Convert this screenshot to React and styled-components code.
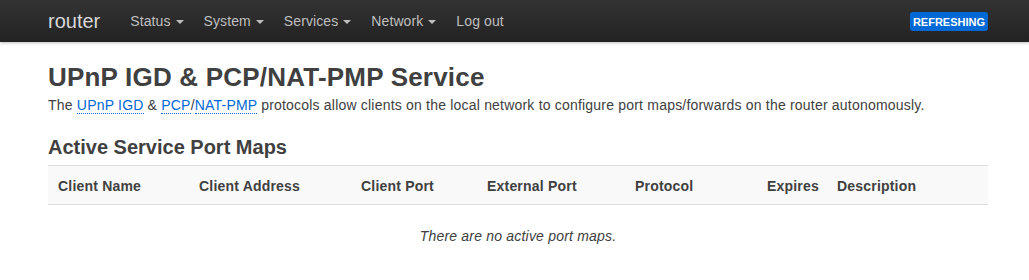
import React from 'react'
import styled, { createGlobalStyle } from 'styled-components'

const GlobalStyle = createGlobalStyle`
html, body {
  margin: 0;
  padding: 0;
  background: #fff;
}
body {
  font-family: "Liberation Sans", Arial, Helvetica, sans-serif;
  font-size: 14px;
  line-height: 18px;
  color: #404040;
}
`

const Header = styled.header`
height: 42px;
background-color: #222;
background-image: linear-gradient(to bottom, #333, #222);
box-shadow: 0 1px 3px rgba(0,0,0,0.25);
`
const Container = styled.div`
width: 940px;
margin-left: 48px;
`
const HeaderInner = styled(Container)`
display: flex;
align-items: center;
height: 42px;
`
const Brand = styled.a`
font-size: 20px;
font-weight: 200;
color: #d8d8d8;
padding-right: 20px;
line-height: 40px;
text-decoration: none;
`
const Nav = styled.ul`
display: flex;
list-style: none;
margin: 0;
padding: 0;
flex: 1;
`
const NavItem = styled.li`
display: flex;
align-items: center;
padding: 0 10px;
line-height: 40px;
color: #bfbfbf;
font-size: 14px;
letter-spacing: 0.1px;
`
const Caret = styled.span`
display: inline-block;
width: 0;
height: 0;
margin-left: 5px;
margin-top: 2px;
border-left: 4px solid transparent;
border-right: 4px solid transparent;
border-top: 4px solid #bfbfbf;
`
const Badge = styled.span`
background: #0069d6;
color: #fff;
font-size: 11px;
font-weight: bold;
line-height: 14px;
padding: 3px 3px 2px;
border-radius: 3px;
text-transform: uppercase;
`
const Main = styled(Container)`
padding-top: 17px;
`
const Title = styled.h2`
margin: 0;
font-size: 26px;
line-height: 36px;
font-weight: bold;
color: #404040;
letter-spacing: 0.2px;
`
const Desc = styled.p`
margin: 1px 0 0;
font-size: 14px;
line-height: 18px;
letter-spacing: 0.2px;
`
const DocLink = styled.a`
color: #0069d6;
text-decoration: none;
border-bottom: 1px dotted #0069d6;
`
const SubTitle = styled.h3`
margin: 20px 0 0;
font-size: 20px;
line-height: 27px;
font-weight: bold;
`
const Table = styled.table`
width: 100%;
border-collapse: collapse;
margin-top: 4px;
table-layout: fixed;
`
const Th = styled.th`
text-align: left;
font-weight: bold;
padding: 11px 10px 9px;
background: #f9f9f9;
border-top: 1px solid #ddd;
border-bottom: 1px solid #ddd;
width: ${({ w }) => w}px;
line-height: 18px;
letter-spacing: 0.2px;
`
const EmptyCell = styled.td`
text-align: center;
font-style: italic;
padding: 22px 10px 10px;
letter-spacing: 0.2px;
`

const columns = [
  { name: 'Client Name', w: 121 },
  { name: 'Client Address', w: 142 },
  { name: 'Client Port', w: 106 },
  { name: 'External Port', w: 128 },
  { name: 'Protocol', w: 112 },
  { name: 'Expires', w: 50 },
  { name: 'Description', w: 141 },
]

const menu = ['Status', 'System', 'Services', 'Network']

const App = () => {
  return (
    <>
      <GlobalStyle />
      <Header>
        <HeaderInner>
          <Brand>router</Brand>
          <Nav>
            {menu.map((m) => (
              <NavItem key={m}>
                {m}
                <Caret />
              </NavItem>
            ))}
            <NavItem>Log out</NavItem>
          </Nav>
          <Badge>Refreshing</Badge>
        </HeaderInner>
      </Header>
      <Main>
        <Title>UPnP IGD &amp; PCP/NAT-PMP Service</Title>
        <Desc>
          The <DocLink>UPnP IGD</DocLink> &amp; <DocLink>PCP</DocLink>/<DocLink>NAT-PMP</DocLink> protocols
          allow clients on the local network to configure port maps/forwards on the router autonomously.
        </Desc>
        <SubTitle>Active Service Port Maps</SubTitle>
        <Table>
          <thead>
            <tr>
              {columns.map((c) => (
                <Th key={c.name} w={c.w}>{c.name}</Th>
              ))}
            </tr>
          </thead>
          <tbody>
            <tr>
              <EmptyCell colSpan={7}>There are no active port maps.</EmptyCell>
            </tr>
          </tbody>
        </Table>
      </Main>
    </>
  )
}

export default App
